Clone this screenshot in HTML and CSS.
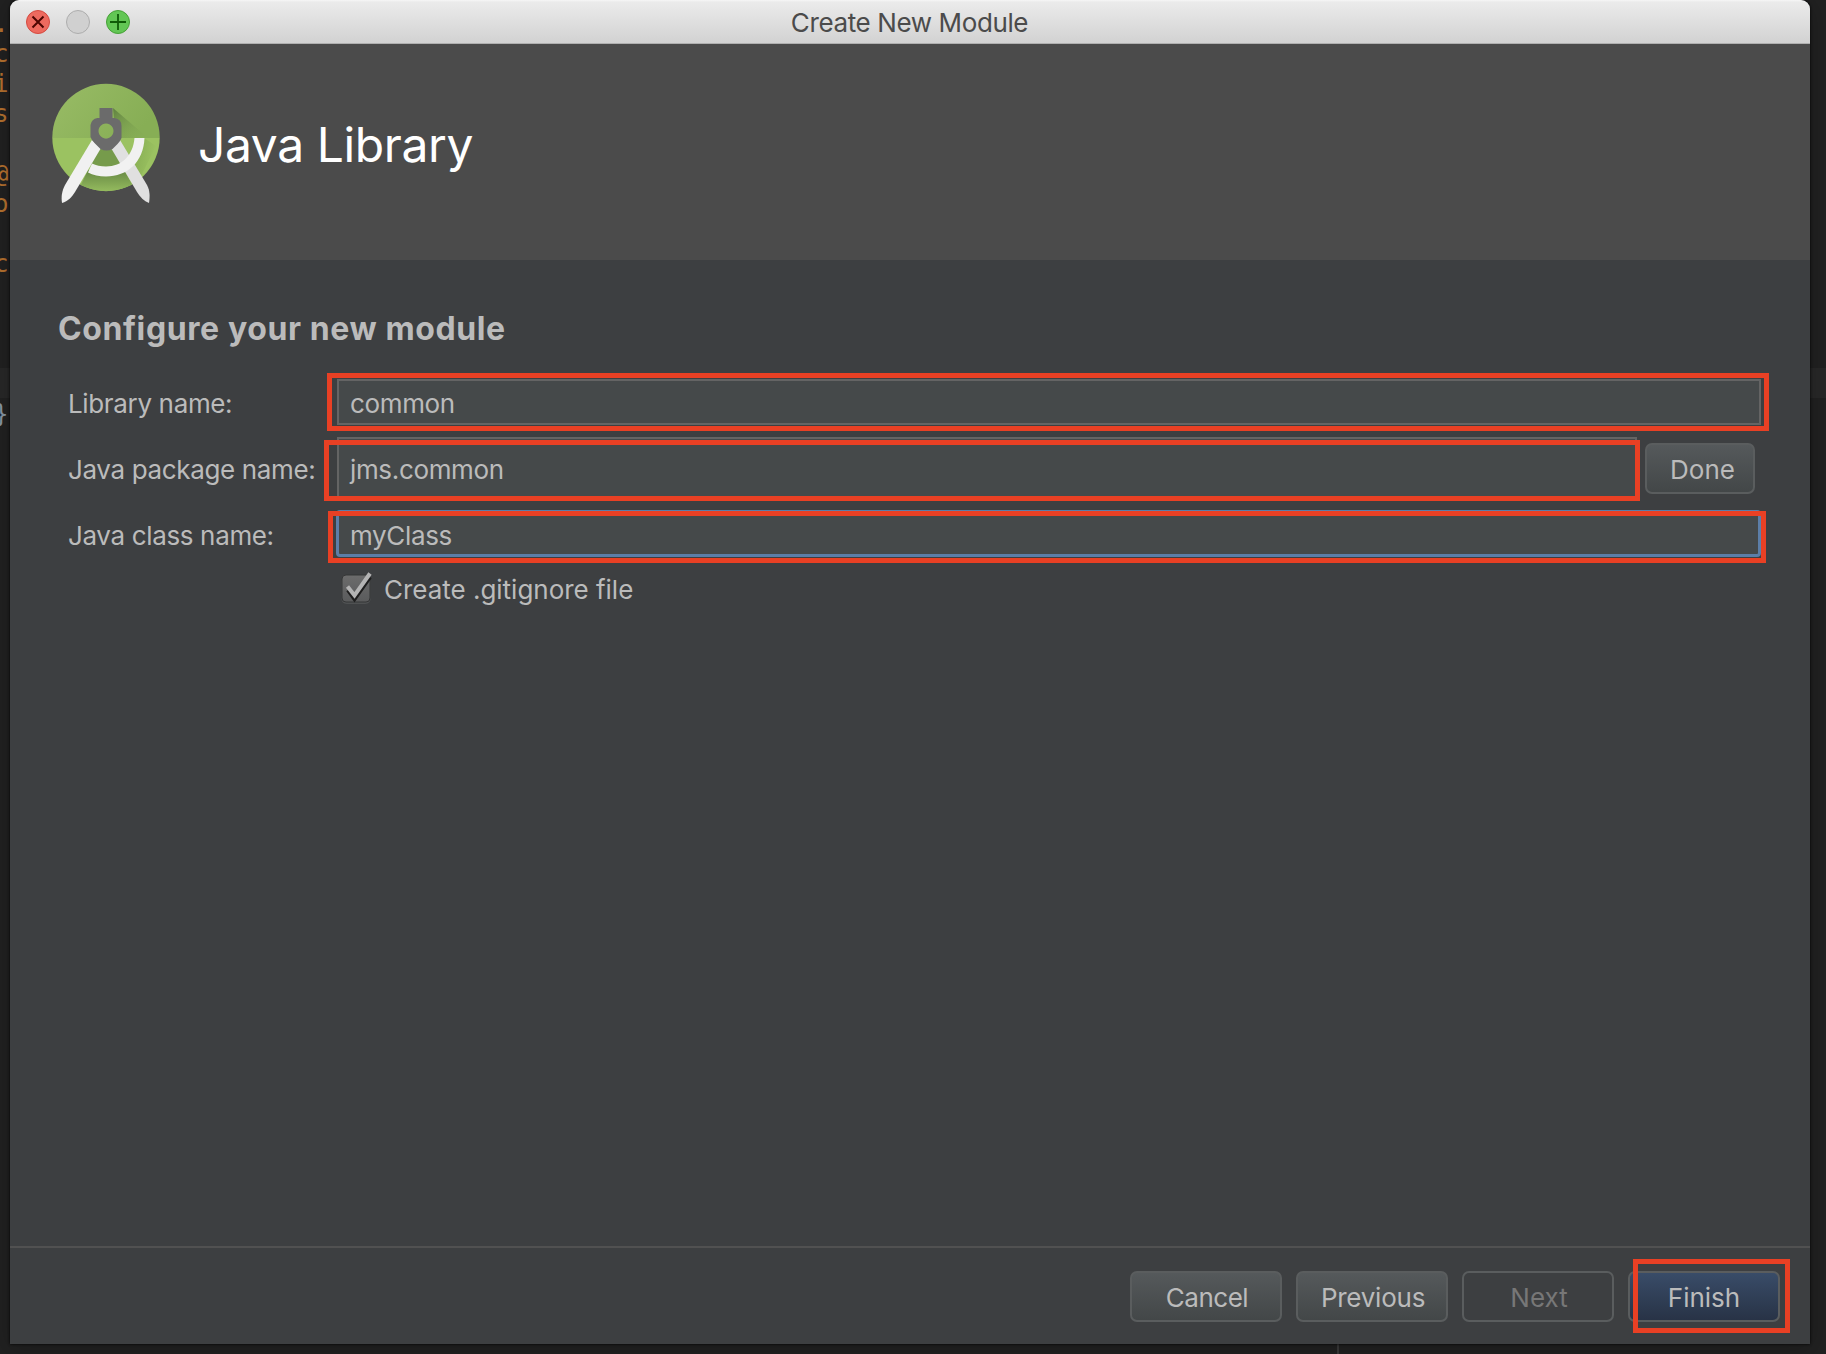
FILE: index.html
```html
<!DOCTYPE html>
<html lang="en">
<head>
<meta charset="utf-8">
<title>Create New Module</title>
<link rel="stylesheet" href="styles.css">
</head>
<body>
<div class="editor" aria-hidden="true">
  <div class="line">.r</div>
  <div class="line">co</div>
  <div class="line">i</div>
  <div class="line">s</div>
  <div class="line"></div>
  <div class="line">@i</div>
  <div class="line">o'</div>
  <div class="line"></div>
  <div class="line">co</div>
  <div class="line"></div>
  <div class="line"></div>
  <div class="line"></div>
  <div class="line current"></div>
  <div class="line brace">}</div>
  <div class="split"></div>
</div>
<main class="window">
  <div class="titlebar">
    <div class="lights">
      <svg class="light" viewBox="0 0 24 24"><circle cx="12" cy="12" r="11.5" fill="#ed6a5f" stroke="#d5493f"/><path d="M6.500 6.500l11 11M17.500 6.500l-11 11" stroke="#4d0602" stroke-width="2"/></svg>
      <svg class="light" viewBox="0 0 24 24"><circle cx="12" cy="12" r="11.5" fill="#d0d0d0" stroke="#adadad"/></svg>
      <svg class="light" viewBox="0 0 24 24"><circle cx="12" cy="12" r="11.5" fill="#62c654" stroke="#46a037"/><path d="M12 4v16M4 12h16" stroke="#0f5b07" stroke-width="1.8"/></svg>
    </div>
    <span class="t title">Create New Module</span>
  </div>
  <header class="banner">
    <svg class="logo" viewBox="0 0 110 124">
      <defs>
        <clipPath id="disc"><circle cx="55" cy="55.500" r="53.700"/></clipPath>
        <linearGradient id="top" x1="0" y1="0" x2="1" y2=".4"><stop offset="0" stop-color="#99bc66"/><stop offset="1" stop-color="#87ae55"/></linearGradient>
        <linearGradient id="shade" x1="0" y1="0" x2="1" y2="1"><stop offset="0" stop-color="#5f8040"/><stop offset="1" stop-color="#87ae55" stop-opacity="0"/></linearGradient>
        <linearGradient id="low" x1="0" y1="0" x2="0" y2="1"><stop offset="0" stop-color="#668843"/><stop offset="1" stop-color="#94ba5e"/></linearGradient>
        <linearGradient id="side" x1="0" y1="0" x2="1" y2=".3"><stop offset="0" stop-color="#7fa64e"/><stop offset="1" stop-color="#9bc261"/></linearGradient>
      </defs>
      <g clip-path="url(#disc)">
        <path d="M0 0h110v56H0z" fill="url(#top)"/>
        <path d="M0 56h110v56H0z" fill="#9bc261"/>
        <path d="M62 26l35 30H65z" fill="url(#shade)"/>
        <path d="M50 66l20-2 8 12-22 14-19-9z" fill="#769b4b"/>
        <path d="M37 88q18 9 36 0l12 21H27z" fill="url(#low)"/>
        <path d="M93 56l12 8-16 32-12-16q14-10 16-24z" fill="url(#side)"/>
      </g>
      <path d="M60 66l9-8 27 45c3 6 3 11 2 18-5-2-9-6-12-11z" fill="#e0e0e0"/>
      <path d="M83.500 56h10c-1 24-17 38.500-38.500 38.500-7 0-13-1.500-18-4l4-9c4 2 8.500 3 14 3 16 0 27-11 28.500-28.500z" fill="#f1f1f1"/>
      <path d="M50 66l-9-8-27 45c-3 6-4 11-3 18 6-2 10-6 13-11z" fill="#f1f1f1"/>
      <path fill-rule="evenodd" d="M48.500 26h13v10h2q7 1 7 8v12q-1 3-4 6l-5 5q-6 3-12 0l-6-6q-3-3-4-6V43q1-6 7-7h2zM55 41.500a7.500 7.500 0 1 0 .01 0z" fill="#6b6b6b"/>
    </svg>
    <h1 class="t name">Java Library</h1>
  </header>
  <section class="body">
    <h2 class="t heading">Configure your new module</h2>
    <div class="row row-library">
      <label class="t">Library name:</label>
      <div class="field"><span class="t">common</span><i class="mark mark-library"></i></div>
    </div>
    <div class="row row-package">
      <label class="t">Java package name:</label>
      <div class="field"><span class="t">jms.common</span><i class="mark mark-package"></i></div>
      <button class="btn done"><span class="t">Done</span></button>
    </div>
    <div class="row row-class">
      <label class="t">Java class name:</label>
      <div class="field focused"><span class="t">myClass</span><i class="mark mark-class"></i></div>
    </div>
    <div class="check">
      <svg class="box" viewBox="0 0 32 36"><defs><linearGradient id="cb" x1="0" y1="0" x2="0" y2="1"><stop offset="0" stop-color="#6c6c6c"/><stop offset="1" stop-color="#5a5b5c"/></linearGradient></defs><rect x="1.500" y="7" width="29" height="27" rx="5" fill="#4f5152"/><rect x="2" y="5" width="28" height="27" rx="4" fill="url(#cb)" stroke="#353637"/><path d="M8 20l6.500 9L30 7" fill="none" stroke="#1e1e1e" stroke-width="4"/><path d="M7.500 16.500l7 9L30 3.500" fill="none" stroke="#b4b4b4" stroke-width="4"/></svg>
      <span class="t">Create .gitignore file</span>
    </div>
  </section>
  <footer class="footer">
    <button class="btn cancel"><span class="t">Cancel</span></button>
    <button class="btn previous"><span class="t">Previous</span></button>
    <button class="btn disabled"><span class="t">Next</span></button>
    <button class="btn primary"><span class="t">Finish</span><i class="mark mark-finish"></i></button>
  </footer>
</main>
</body>
</html>
```
FILE: styles.css
```css
* { box-sizing: border-box; }
html, body { margin: 0; height: 100%; overflow: hidden; }
body {
  position: relative;
  background: #212121;
  color: #bbb;
  font-family: Inter, "Liberation Sans", sans-serif;
  font-size: 26px;
  font-weight: 425;
}
h1, h2 { margin: 0; }
.t { display: block; white-space: pre; }

.editor {
  position: absolute;
  inset: 0;
  padding-top: 8px;
  font: 24px/30px "DejaVu Sans Mono", monospace;
  color: #b5712f;
}
.line { height: 30px; padding-top: 1px; text-indent: -6px; white-space: pre; }
.current { background: #282828; }
.brace { color: #8796a5; }
.split { position: absolute; left: 1337px; bottom: 0; width: 2px; height: 10px; background: #3a3a3a; }

.window {
  position: relative;
  display: flex;
  flex-direction: column;
  width: 1800px;
  height: 1344px;
  margin-left: 10px;
  background: #3d3f41;
  border-radius: 9px 9px 0 0;
  box-shadow: 0 0 3px #000, 0 4px 24px rgba(0, 0, 0, .25);
}
.titlebar {
  display: grid;
  grid-template-columns: 1fr auto 1fr;
  align-items: center;
  height: 44px;
  padding-left: 16px;
  border-radius: 9px 9px 0 0;
  border-bottom: 1px solid #b0b0b0;
  background: linear-gradient(#f6f6f6 0, #ebebeb 2px, #d2d2d2 100%);
  color: #4b4b4b;
}
.title { margin: 2px 17px 0 0; letter-spacing: -.38px; }
.lights { display: flex; gap: 16px; }
.light { width: 24px; height: 24px; }

.banner { display: flex; height: 216px; padding: 38px 0 0 41px; background: #4b4b4b; color: #fff; }
.logo { width: 110px; height: 124px; }
.name { margin: 27px 0 0 37px; font-size: 48px; line-height: 72px; font-weight: 410; letter-spacing: -.4px; }

.body { flex: 1; padding: 49px 49px 0 48px; }
.heading { height: 40px; line-height: 40px; font-size: 32px; font-weight: 700; letter-spacing: .6px; }
.row { display: flex; align-items: center; padding-left: 10px; }
.row .t { padding-top: 1px; }
.row label { width: 269px; letter-spacing: -.35px; }
.field { position: relative; flex: 1; display: flex; align-items: center; height: 100%; padding-left: 11px; border: 2px solid #646464; background: #45494a; letter-spacing: -.35px; }
.row-library { height: 46px; margin-top: 30px; }
.row-library .t { padding-top: 2px; }
.row-package { height: 63px; margin-top: 12px; }
.row-package .field { flex: none; width: 1300px; }
.row-class { height: 47px; margin-top: 10px; }
.row-class label { width: 268px; }
.row-class .t { padding-top: 3px; }
.focused { border: 3px solid #5c7ea8; border-radius: 4px; }
.mark { position: absolute; border: 5px solid #e94024; }
.mark-library { inset: -8px -10px -8px -12px; }
.mark-package { inset: 1px -5px -3px -15px; }
.mark-class { inset: -2px -8px -9px -11px; }
.mark-finish { inset: -14px -12px -13px 3px; }

.btn {
  position: relative;
  display: flex;
  align-items: center;
  justify-content: center;
  width: 152px;
  height: 51px;
  padding: 0 0 0 2px;
  border: 2px solid #5a5d5e;
  border-radius: 7px;
  background: linear-gradient(#55595b, #434748);
  color: #bbb;
  font: inherit;
}
.btn .t { padding-top: 1px; }
.cancel { letter-spacing: -.5px; }
.previous { letter-spacing: -.25px; }
.done { width: 110px; margin-left: 8px; padding-left: 5px; }
.disabled { background: none; color: #777; }
.primary { padding-left: 0; background: linear-gradient(#394c68, #283346); }

.check { display: flex; align-items: center; height: 36px; margin: 13px 0 0 282px; }
.box { width: 32px; height: 36px; }
.check .t { margin-left: 12px; padding-top: 2px; letter-spacing: -.02px; }

.footer { display: flex; justify-content: flex-end; gap: 14px; height: 98px; padding: 23px 30px 0 0; border-top: 2px solid #515151; }
```
